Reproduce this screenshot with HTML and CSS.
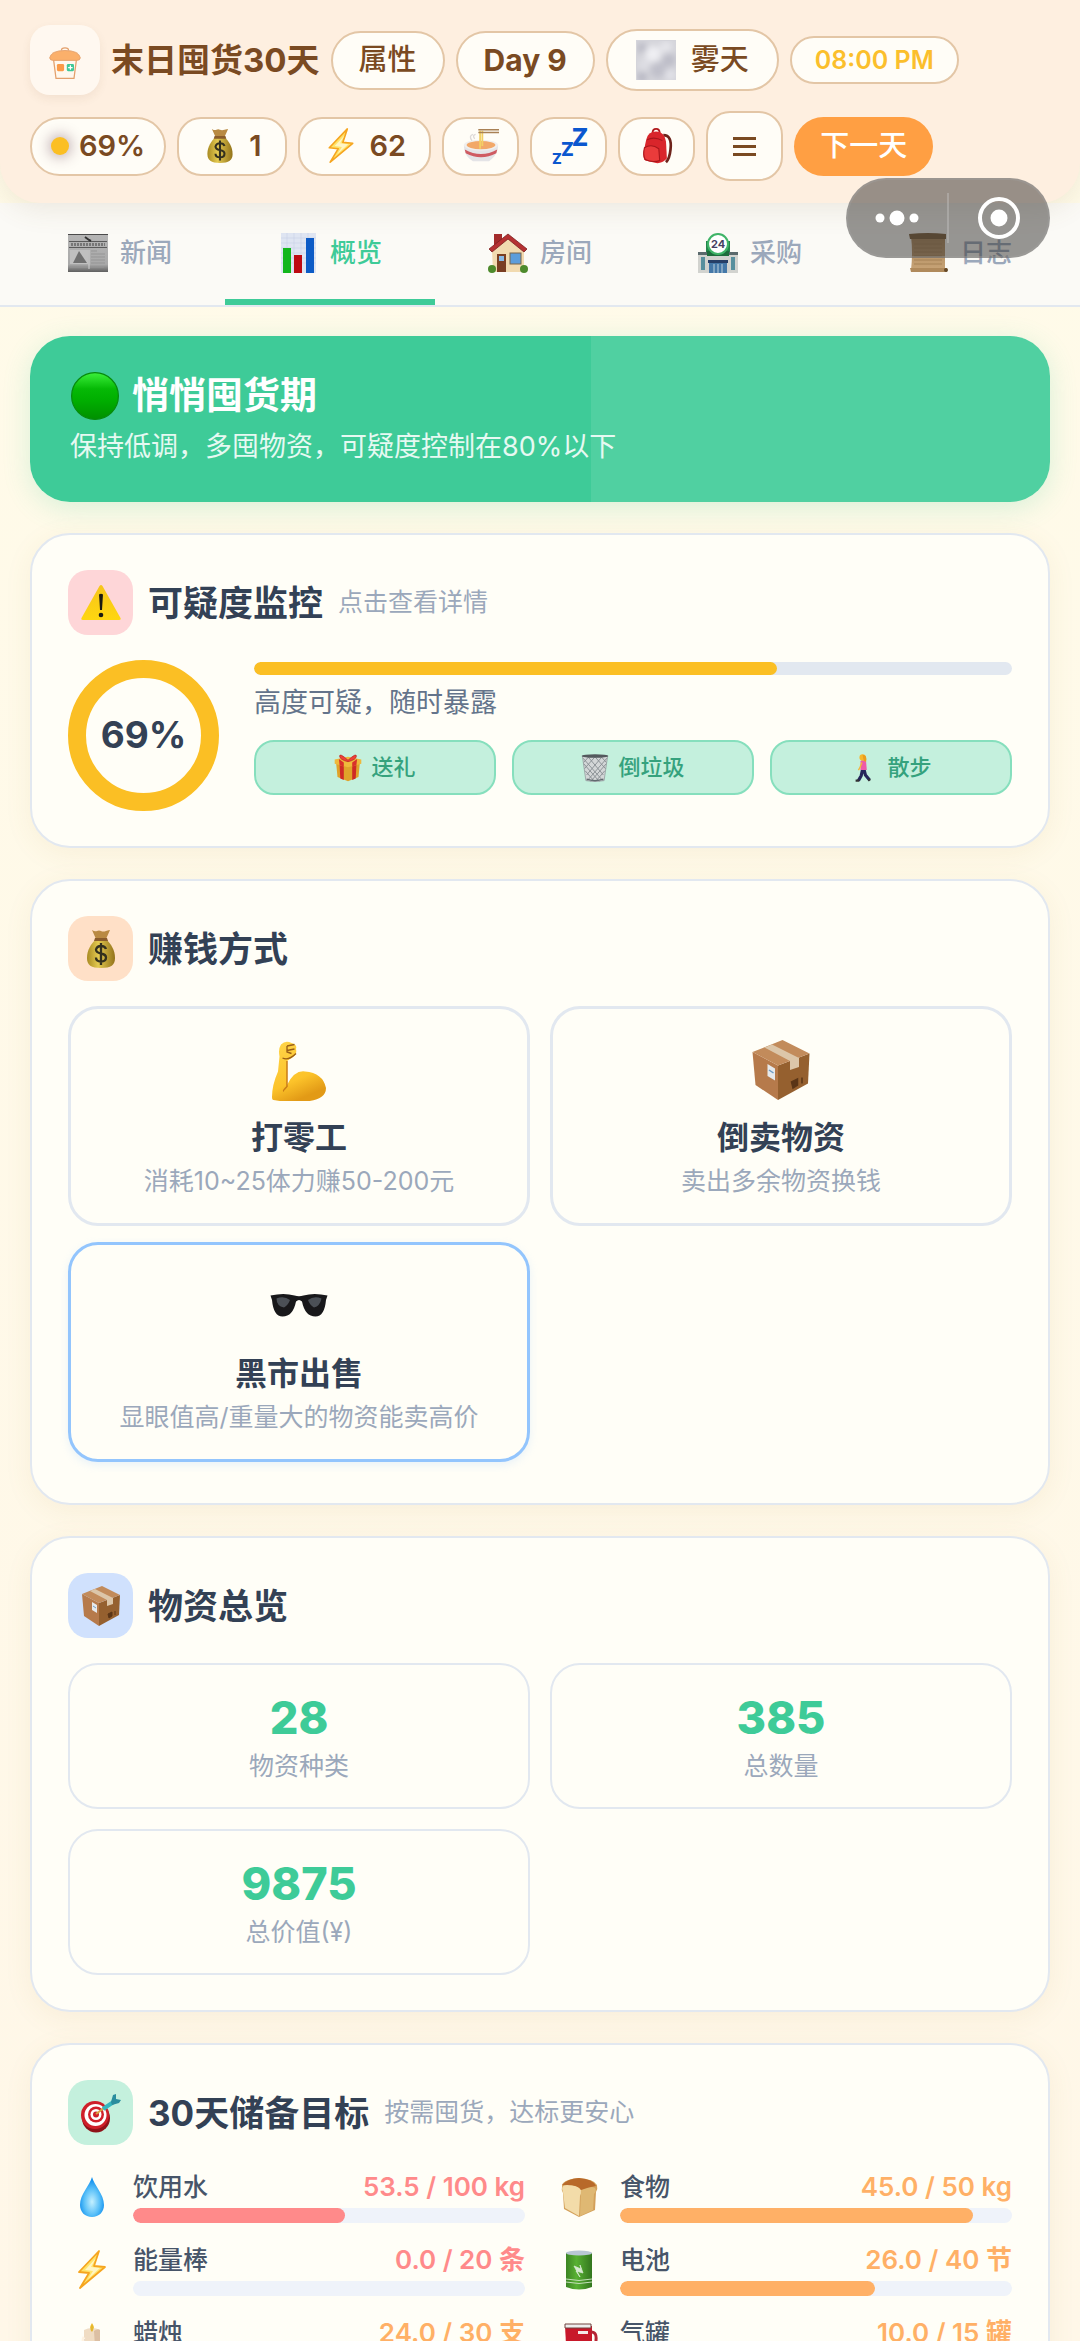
FILE: index.html
```html
<!DOCTYPE html>
<html lang="zh-CN">
<head>
    <meta charset="utf-8">
    <meta name="viewport" content="width=device-width, initial-scale=1">
    <title>末日囤货30天</title>
    <link rel="stylesheet" href="styles.css">
</head>
<body>
    <svg class="sprite" aria-hidden="true">
        <defs>
            <linearGradient id="g-gold" x1="0" x2="1" y1="0" y2="0">
                <stop offset="0" stop-color="#a98b22"/><stop offset="0.4" stop-color="#e3c950"/><stop offset="1" stop-color="#93731a"/>
            </linearGradient>
            <linearGradient id="g-arm" x1="0" x2="0.4" y1="0" y2="1">
                <stop offset="0" stop-color="#ffd54a"/><stop offset="0.7" stop-color="#fcc32a"/><stop offset="1" stop-color="#e29a16"/>
            </linearGradient>
            <linearGradient id="g-warn" x1="0" x2="0" y1="0" y2="1">
                <stop offset="0" stop-color="#f6c51c"/><stop offset="1" stop-color="#ffd60f"/>
            </linearGradient>
            <linearGradient id="g-ball" x1="0" x2="0" y1="0" y2="1">
                <stop offset="0" stop-color="#3cf03c"/><stop offset="0.35" stop-color="#05b905"/><stop offset="0.6" stop-color="#00ae00"/><stop offset="1" stop-color="#009000"/>
            </linearGradient>
            <radialGradient id="g-drop" cx="0.5" cy="0.62" r="0.55">
                <stop offset="0" stop-color="#c4f0ff"/><stop offset="0.6" stop-color="#58bff8"/><stop offset="1" stop-color="#1290ee"/>
            </radialGradient>
            <linearGradient id="g-paper" x1="0" x2="0" y1="0" y2="1">
                <stop offset="0" stop-color="#b5b5b5"/><stop offset="0.8" stop-color="#a9a9a9"/><stop offset="1" stop-color="#5f5f5f"/>
            </linearGradient>
            <linearGradient id="g-green" x1="0" x2="1" y1="0" y2="0">
                <stop offset="0" stop-color="#3c8423"/><stop offset="0.4" stop-color="#58b133"/><stop offset="1" stop-color="#33761e"/>
            </linearGradient>
            <linearGradient id="g-scroll" x1="0" x2="0" y1="0" y2="1">
                <stop offset="0" stop-color="#a98559"/><stop offset="1" stop-color="#c7a376"/>
            </linearGradient>
            <filter id="f-fog" x="0" y="0" width="1" height="1">
                <feGaussianBlur stdDeviation="3"/>
            </filter>
        </defs>

        <symbol id="i-logo" viewBox="0 0 40 40">
            <path d="M7 13 10 36h20l3-23z" fill="#fff8ee" stroke="#e3a06c" stroke-width="1.4"/>
            <path d="M16 5q0-3 4-3t4 3" fill="none" stroke="#e3a06c" stroke-width="1.4"/>
            <path d="M3 13Q5 5 20 5t17 8q0 3-4 3H7q-4 0-4-3z" fill="#fbb06b" stroke="#e3a06c"/>
            <rect x="11" y="20" width="8" height="8" rx="1.5" fill="#fb9a48"/>
            <rect x="22" y="20" width="8" height="8" rx="1.5" fill="#3fc897"/>
            <path d="M26 21.5v5M23.500 24h5" stroke="#fff" stroke-width="1.4"/>
        </symbol>
        <symbol id="i-fog" viewBox="0 0 40 40">
            <rect width="40" height="40" fill="#d4d4da"/>
            <g filter="url(#f-fog)">
                <circle cx="6" cy="8" r="5" fill="#b9b9c4"/><circle cx="17" cy="14" r="8" fill="#efeff3"/><circle cx="30" cy="7" r="6" fill="#e6e6eb"/>
                <circle cx="33" cy="20" r="7" fill="#bdbdc8"/><circle cx="8" cy="25" r="6" fill="#dedee4"/><circle cx="22" cy="30" r="8" fill="#c0c0ca"/>
                <circle cx="6" cy="37" r="5" fill="#b6b6c2"/><circle cx="34" cy="35" r="5" fill="#e4e4ea"/>
            </g>
        </symbol>
        <symbol id="i-money" viewBox="0 0 40 40">
            <path d="M11 1q3 2 5 1t4 0 5 0 4-1l-4 9H15z" fill="#b98a43"/>
            <path d="M15 10h10c5 5 9 11 9 19 0 7-4 10-14 10S6 36 6 29c0-8 4-14 9-19z" fill="url(#g-gold)"/>
            <path d="M14 9h12l1 3H13z" fill="#8a5c2c"/>
            <path d="M25 20q-1-3-5-3t-5 3.500q0 3 5 4t5 4q0 4-5 4t-5-4M20 14v22" fill="none" stroke="#33301e" stroke-width="2.300"/>
        </symbol>
        <symbol id="i-bolt" viewBox="0 0 40 40">
            <path d="M27 1 7 22l10 1L8 38l25-21-11-1z" fill="#ffe46a" stroke="#f6a51f" stroke-width="1.800" stroke-linejoin="round"/>
            <path d="M24 8 13 20l8 1-5 8 12-11-9-1z" fill="#fff5c4"/>
        </symbol>
        <symbol id="i-noodle" viewBox="0 0 40 40">
            <path d="M1 19h38c0 10-6 15-10 18H11C6 34 1 29 1 19z" fill="#e4e4e7"/>
            <path d="M2 24q18 10 36 0l-1 4q-17 9-34 0z" fill="#cf5b62"/>
            <ellipse cx="20" cy="19" rx="19" ry="6" fill="#f1efee"/>
            <ellipse cx="20" cy="19" rx="16" ry="4.500" fill="#f2a869"/>
            <path d="M19 3v20M21.500 3v17" stroke="#f3d065" stroke-width="2"/>
            <path d="M17 2h23M17 5h23" stroke="#a98155" stroke-width="1.600"/>
            <path d="M10 14q-4-5 1-7M13 12q-3-4 1-5" fill="none" stroke="#dedad8" stroke-width="1.500"/>
        </symbol>
        <symbol id="i-bag" viewBox="0 0 40 40">
            <path d="M27 8q10 0 8 16-1 10-5 14" fill="none" stroke="#6e231b" stroke-width="3"/>
            <path d="M15 6q0-5 4-5t4 5" fill="none" stroke="#b0181b" stroke-width="2"/>
            <path d="M8 13Q10 4 19 4t11 11l1 19q-6 6-12 5L7 36q-3-2-2-9z" fill="#d9252b"/>
            <path d="M6 22q8-5 16 1l1 13q-8 3-16-1-3-5-1-13z" fill="#ea3b3b" stroke="#a7161b" stroke-width="1.200"/>
            <path d="M9 13q8-4 17 1" fill="none" stroke="#a7161b" stroke-width="1.200"/>
        </symbol>
        <symbol id="i-news" viewBox="0 0 40 40">
            <rect y="1" width="40" height="38" fill="url(#g-paper)"/>
            <path d="M0 1.500h40" stroke="#4b4b4b"/>
            <path d="M1 8.500h38M1 14.500h38" stroke="#5a5a5a"/>
            <path d="M3 11.500h34" stroke="#777" stroke-width="3" stroke-dasharray="2 1"/>
            <path d="M17 4l4 3 2 1" fill="none" stroke="#333" stroke-width="2"/>
            <rect x="2" y="17" width="18" height="14" fill="#c0c0c0"/>
            <path d="M5 30l3-6 3-6 4 6 4 6z" fill="#707070"/>
            <path d="M23 18h6M23 21h14M23 24h14M23 27h14M23 30h14M2 34h34" stroke="#959595"/>
            <path d="M21 17v19" stroke="#d0d0d0"/>
        </symbol>
        <symbol id="i-chart" viewBox="0 0 40 40">
            <rect x="3" width="35" height="40" fill="#dfe5f2"/>
            <path d="M3 5h35M3 10h35M3 15h35M3 20h35M3 25h35M3 30h35M9 0v40M16 0v40M23 0v40M30 0v40" stroke="#c9d2e6" stroke-width="0.600"/>
            <rect x="5" y="15" width="8" height="25" fill="#12b61c"/>
            <rect x="16" y="22" width="8" height="18" fill="#bd0a12"/>
            <rect x="28" y="5" width="8" height="35" fill="#0c5bc6"/>
        </symbol>
        <symbol id="i-house" viewBox="0 0 40 40">
            <rect x="6" y="1" width="8" height="13" fill="#a32c2b"/>
            <path d="M4 17 20 4l16 13v22H5z" fill="#f1dab0"/>
            <path d="M1 16 20 1l19 15-3 3L20 6 4 19z" fill="#b53132" stroke="#7c1f20" stroke-width="0.800"/>
            <rect x="9" y="21" width="9" height="18" fill="#7a3e22"/><rect x="11" y="23" width="5" height="5" fill="#88b9e5"/>
            <rect x="22" y="20" width="11" height="11" fill="#5c9ddb" stroke="#7b6548"/>
            <circle cx="4" cy="36" r="4" fill="#4d8a2c"/><circle cx="36" cy="36" r="4" fill="#4d8a2c"/>
        </symbol>
        <symbol id="i-store" viewBox="0 0 40 40">
            <path d="M8 8h24v13H8z" fill="#24854b"/>
            <path d="M0 19h40v21H0z" fill="#d2d3cf"/>
            <path d="M0 19h40v3H0z" fill="#5b6a6d"/>
            <path d="M9 18h22v5H9z" fill="#1d6c3c"/>
            <path d="M3 24h4v13H3zM33 24h4v13h-4z" fill="#578f9d"/>
            <path d="M11 29h18v11H11z" fill="#4478a8"/><path d="M10 27h20v3H10z" fill="#263f67"/>
            <path d="M16 31v9M20 31v9M24 31v9" stroke="#bdd0dc"/>
            <circle cx="20" cy="11" r="10" fill="#fff" stroke="#3fb468" stroke-width="2"/>
        </symbol>
        <symbol id="i-scroll" viewBox="0 0 40 40">
            <path d="M3 3h34v34H3q2-17 0-34z" fill="url(#g-scroll)"/>
            <path d="M1 1q19-2 37 0v5H2z" fill="#7c5e3b"/><path d="M2 35h37v4H3z" fill="#b08a5c"/>
            <path d="M6 11h28M6 15h28M6 19h28M6 23h28M6 27h28M6 31h28" stroke="#a58256"/>
            <circle cx="38" cy="37" r="2" fill="#654827"/>
        </symbol>
        <symbol id="i-ball" viewBox="0 0 40 40">
            <circle cx="20" cy="20" r="19.500" fill="url(#g-ball)" stroke="#078b0d"/>
        </symbol>
        <symbol id="i-warn" viewBox="0 0 40 40">
            <path d="M18.500 3q1.500-2 3 0L39.500 35q.8 2-1.500 2H2q-2.300 0-1.500-2z" fill="url(#g-warn)"/>
            <path d="M18 11.500q2-1.500 4 0L21 27h-2z" fill="#1b1a12"/><circle cx="20" cy="32" r="2.300" fill="#1b1a12"/>
        </symbol>
        <symbol id="i-gift" viewBox="0 0 40 40">
            <path d="M3 12 20 17l17-5-2 21-15 6-15-6z" fill="#e0a32a"/>
            <path d="M1 8 20 4l19 4v6l-19 5L1 14z" fill="#efb93b"/>
            <path d="M8 16l6 2v19l-5-2zM26 18l6-2-1 19-5 2z" fill="#cf2a26"/>
            <path d="M7 7l7 5v6l-6-2zM33 7l-7 5v6l6-2z" fill="#d9302b"/>
            <path d="M20 9Q8-2 8 3t12 8q12-3 12-8t-12 6z" fill="#ee4038" stroke="#b81f20"/>
        </symbol>
        <symbol id="i-bin" viewBox="0 0 40 40">
            <path d="M2 3h36l-5 35q-13 3-26 0z" fill="#d3d6d7" stroke="#8d9296"/>
            <path d="M3 6 31 38M10 4l22 26M20 4l15 17M29 4l7 8M4 14l22 25M6 24l13 15M37 6 9 38M30 4 8 30M20 4 5 21M11 4 4 12M36 14 14 39M34 24 21 39" stroke="#878d92" stroke-width="1.300"/>
            <ellipse cx="20" cy="3" rx="19" ry="2.500" fill="#53595d"/><path d="M8 36q12 4 24 0" stroke="#626a6f" stroke-width="2" fill="none"/>
        </symbol>
        <symbol id="i-walk" viewBox="0 0 40 40">
            <path d="M18 22 16 31 12 38M20 22l2 8 6 7" fill="none" stroke="#26265a" stroke-width="4.500"/>
            <path d="M8 38h5M26 38l3-2" stroke="#333" stroke-width="3"/>
            <path d="M15 10q5-3 8 1l1 12h-9z" fill="#ee5ba8"/>
            <path d="M17 12l-3 8-2 3" fill="none" stroke="#f3b53b" stroke-width="2"/>
            <circle cx="18" cy="5" r="4.500" fill="#f6b72c"/><path d="M18 1q7 0 5 10-3 1-4-4z" fill="#ea9c1e"/>
        </symbol>
        <symbol id="i-arm" viewBox="0 0 40 40">
            <path d="M8 3q3-3 7-1 4 1 3 4 1 4-3 6l-3 2v16q5-10 12-9 12 1 14 11 0 8-14 9-10 1-21-1-1 0-1-2 0-8 4-17L7 11q-1-5 1-8z" fill="url(#g-arm)"/>
            <path d="M12 14v17q-3 3-2 3" fill="none" stroke="#c97c16"/>
            <path d="M12 4l5-1M12 7l5-1M12 4v4l3 1M9 12q4 2 9-3" fill="none" stroke="#9a5f16" stroke-width="0.900"/>
        </symbol>
        <symbol id="i-box" viewBox="0 0 40 40">
            <path d="M1 8 18 17v23L3 30z" fill="#b67a4b"/><path d="M18 17 39 9l-1 20-20 11z" fill="#95602f"/>
            <path d="M1 8 21 0l18 9-21 8z" fill="#c28b5b"/>
            <path d="M9 5l5-2 18 9v6l-6 2v-6z" fill="#dcc6a9"/>
            <path d="M11 16l5 3v8l-5-3z" fill="#e6e9ec"/><path d="M12 20l3 2" stroke="#6c9bc4"/>
            <path d="M27 28l4-2v4l-3 2zM34 25v4" fill="#5a3517" stroke="#5a3517"/>
        </symbol>
        <symbol id="i-shades" viewBox="0 0 40 40">
            <path d="M1 13q9-2 16 0 3 1 6 0 7-2 16 0l-1 3q-1 11-7 11-7 0-9-10-2-2-4 0-2 10-9 10-6 0-7-11z" fill="#18181a"/>
            <path d="M5 15q5-2 9 1-1 3-4 5-5-1-5-6zM26 16q4-3 9-1-1 5-5 6-3-2-4-5z" fill="#4b5056"/>
        </symbol>
        <symbol id="i-target" viewBox="0 0 40 40">
            <ellipse cx="15" cy="25" rx="14" ry="14.500" fill="#8f1219"/>
            <ellipse cx="14" cy="22" rx="14" ry="14" fill="#cf1f29"/><ellipse cx="14.500" cy="22" rx="11" ry="11" fill="#fff"/>
            <ellipse cx="15" cy="21.500" rx="8" ry="8" fill="#cf1f29"/><ellipse cx="15" cy="21.500" rx="5.500" ry="5.500" fill="#fff"/><circle cx="15" cy="21.500" r="3" fill="#cf1f29"/>
            <path d="M15 21 23 15" stroke="#d9a441" stroke-width="2"/>
            <path d="M22 16 34 8" stroke="#35b5bf" stroke-width="4"/>
            <path d="M30 9l2-7 3-1v5l5 1-2 3-7 2z" fill="#2a8d9e"/>
        </symbol>
        <symbol id="i-drop" viewBox="0 0 40 40">
            <path d="M20 0c2 8 12 17 12 28 0 7-5 12-12 12S8 35 8 28C8 17 18 8 20 0z" fill="url(#g-drop)"/>
        </symbol>
        <symbol id="i-bread" viewBox="0 0 40 40">
            <path d="M3 10Q2 3 19 1q16 1 19 7 1 4-1 7l-1 18-16 7L5 32 4 16q-2-3-1-6z" fill="#d3a05a"/>
            <path d="M4 15Q1 8 8 8q12 0 14 5 1 3-1 6l-1 20L6 31z" fill="#f3dca9"/>
            <path d="M22 13q9-5 14-2 2 3-1 6l-1 16-13 6z" fill="#dfb873"/>
            <path d="M3 8q5-6 17-7 14 1 17 8-7 1-15 4-3-5-14-5z" fill="#b8692a"/>
        </symbol>
        <symbol id="i-battery" viewBox="0 0 40 40">
            <path d="M7 3v34q13 5 26 0V3z" fill="url(#g-green)"/><ellipse cx="20" cy="3" rx="13" ry="2.500" fill="#b9c7d4"/>
            <path d="M15 16l7 3-1-4 3 8-7-2 4 6z" fill="#d6e9d0" stroke="#d6e9d0" stroke-width="0.800"/>
            <path d="M7 29q13 3 26 0M7 32q13 3 26 0" fill="none" stroke="#c4dfb9"/>
        </symbol>
        <symbol id="i-candle" viewBox="0 0 40 40">
            <path d="M20 0q4 6 0 9-4-3 0-9z" fill="#f2c43c"/>
            <path d="M12 7q8-4 16 0v31H12z" fill="#f0dcc3"/><path d="M22 8q4-3 6-1v31h-4z" fill="#dcbfa3"/><path d="M20 1q3 4 0 8-3-3 0-8z" fill="#e5b82f"/><path d="M12 14q-2 4 1 6" stroke="#fff3e2" stroke-width="3"/>
        </symbol>
        <symbol id="i-can" viewBox="0 0 40 40">
            <path d="M6 3h27v36H8z" fill="#c8182a"/><path d="M6 1h26v4H6z" fill="#eee" stroke="#71443f"/>
            <path d="M32 9q6 0 5 8v14" fill="none" stroke="#b52535" stroke-width="3"/><rect x="19" y="8" width="10" height="3" fill="#f3e8e8"/>
        </symbol>
    </svg>

    <header class="top-bar">
        <div class="top-row">
            <div class="logo"><svg class="icon"><use href="#i-logo"/></svg></div>
            <h1 class="app-title">末日囤货30天</h1>
            <button class="pill pill-attr">属性</button>
            <span class="pill pill-day">Day 9</span>
            <span class="pill pill-weather"><svg class="icon icon-m"><use href="#i-fog"/></svg>雾天</span>
            <span class="pill pill-time">08:00 PM</span>
        </div>
        <div class="top-row">
            <button class="pill stat-pill round"><span class="dot"></span>69%</button>
            <span class="pill stat-pill"><svg class="icon icon-s"><use href="#i-money"/></svg>1</span>
            <span class="pill stat-pill"><svg class="icon icon-s"><use href="#i-bolt"/></svg>62</span>
            <button class="pill icon-pill" aria-label="吃饭"><svg class="icon icon-s"><use href="#i-noodle"/></svg></button>
            <button class="pill icon-pill" aria-label="睡觉">
                <svg class="icon icon-s zzz" viewBox="0 0 40 40"><text x="23" y="20" font-size="27">Z</text><text x="11" y="31" font-size="21">Z</text><text x="1" y="40" font-size="16">Z</text></svg>
            </button>
            <button class="pill icon-pill" aria-label="背包"><svg class="icon icon-s"><use href="#i-bag"/></svg></button>
            <button class="pill icon-pill menu" aria-label="菜单"><span class="menu-lines"></span></button>
            <button class="pill next-day">下一天</button>
        </div>
    </header>

    <nav class="tabs">
        <a class="tab" href="#news"><svg class="icon icon-m"><use href="#i-news"/></svg>新闻</a>
        <a class="tab active" href="#overview"><svg class="icon icon-m"><use href="#i-chart"/></svg>概览</a>
        <a class="tab" href="#room"><svg class="icon icon-m"><use href="#i-house"/></svg>房间</a>
        <a class="tab" href="#shop"><svg class="icon icon-m" viewBox="0 0 40 40"><use href="#i-store"/><text class="store-sign" x="20" y="15">24</text></svg>采购</a>
        <a class="tab" href="#log"><svg class="icon icon-m"><use href="#i-scroll"/></svg>日志</a>
    </nav>

    <!-- mini program capsule -->
    <div class="capsule">
        <button class="capsule-btn" aria-label="更多"><svg width="50" height="44" viewBox="0 0 50 44"><g fill="#fff"><circle cx="7" cy="22" r="4.500"/><circle cx="24" cy="22" r="7.500"/><circle cx="41" cy="22" r="4.500"/></g></svg></button>
        <button class="capsule-btn" aria-label="关闭"><svg width="44" height="44" viewBox="0 0 44 44"><circle cx="22" cy="22" r="19" fill="none" stroke="#fff" stroke-width="4"/><circle cx="22" cy="22" r="8.500" fill="#fff"/></svg></button>
    </div>

    <main class="content">
        <section class="phase">
            <h2 class="phase-title"><svg class="icon"><use href="#i-ball"/></svg>悄悄囤货期</h2>
            <p class="phase-desc">保持低调，多囤物资，可疑度控制在80%以下</p>
        </section>

        <section class="card">
            <div class="card-head">
                <span class="badge badge-red"><svg class="icon icon-m"><use href="#i-warn"/></svg></span>
                <h2>可疑度监控</h2>
                <span class="hint">点击查看详情</span>
            </div>
            <div class="suspicion">
                <div class="ring">69%</div>
                <div class="suspicion-body">
                    <div class="meter"><div class="meter-fill" style="width: 69%"></div></div>
                    <p class="suspicion-text">高度可疑，随时暴露</p>
                    <div class="actions">
                        <button class="action"><svg class="icon"><use href="#i-gift"/></svg>送礼</button>
                        <button class="action"><svg class="icon"><use href="#i-bin"/></svg>倒垃圾</button>
                        <button class="action"><svg class="icon"><use href="#i-walk"/></svg>散步</button>
                    </div>
                </div>
            </div>
        </section>

        <section class="card">
            <div class="card-head">
                <span class="badge badge-orange"><svg class="icon icon-m"><use href="#i-money"/></svg></span>
                <h2>赚钱方式</h2>
            </div>
            <div class="earn-grid">
                <button class="earn">
                    <svg class="icon"><use href="#i-arm"/></svg>
                    <span class="earn-name">打零工</span>
                    <span class="earn-desc">消耗10~25体力赚50-200元</span>
                </button>
                <button class="earn">
                    <svg class="icon"><use href="#i-box"/></svg>
                    <span class="earn-name">倒卖物资</span>
                    <span class="earn-desc">卖出多余物资换钱</span>
                </button>
                <button class="earn black-market">
                    <svg class="icon"><use href="#i-shades"/></svg>
                    <span class="earn-name">黑市出售</span>
                    <span class="earn-desc">显眼值高/重量大的物资能卖高价</span>
                </button>
            </div>
        </section>

        <section class="card">
            <div class="card-head">
                <span class="badge badge-blue"><svg class="icon icon-m"><use href="#i-box"/></svg></span>
                <h2>物资总览</h2>
            </div>
            <div class="stat-grid">
                <div class="stat"><b>28</b><span>物资种类</span></div>
                <div class="stat"><b>385</b><span>总数量</span></div>
                <div class="stat"><b>9875</b><span>总价值(¥)</span></div>
            </div>
        </section>

        <section class="card">
            <div class="card-head">
                <span class="badge badge-green"><svg class="icon icon-m"><use href="#i-target"/></svg></span>
                <h2>30天储备目标</h2>
                <span class="hint">按需囤货，达标更安心</span>
            </div>
            <div class="goals">
                <div class="goal low">
                    <svg class="icon"><use href="#i-drop"/></svg>
                    <div class="goal-body">
                        <div class="goal-text"><span>饮用水</span><b>53.5 / 100 kg</b></div>
                        <div class="goal-bar"><div class="goal-fill" style="width: 54%"></div></div>
                    </div>
                </div>
                <div class="goal">
                    <svg class="icon"><use href="#i-bread"/></svg>
                    <div class="goal-body">
                        <div class="goal-text"><span>食物</span><b>45.0 / 50 kg</b></div>
                        <div class="goal-bar"><div class="goal-fill" style="width: 90%"></div></div>
                    </div>
                </div>
                <div class="goal low">
                    <svg class="icon"><use href="#i-bolt"/></svg>
                    <div class="goal-body">
                        <div class="goal-text"><span>能量棒</span><b>0.0 / 20 条</b></div>
                        <div class="goal-bar"><div class="goal-fill" style="width: 0%"></div></div>
                    </div>
                </div>
                <div class="goal">
                    <svg class="icon"><use href="#i-battery"/></svg>
                    <div class="goal-body">
                        <div class="goal-text"><span>电池</span><b>26.0 / 40 节</b></div>
                        <div class="goal-bar"><div class="goal-fill" style="width: 65%"></div></div>
                    </div>
                </div>
                <div class="goal">
                    <svg class="icon"><use href="#i-candle"/></svg>
                    <div class="goal-body">
                        <div class="goal-text"><span>蜡烛</span><b>24.0 / 30 支</b></div>
                        <div class="goal-bar"><div class="goal-fill" style="width: 80%"></div></div>
                    </div>
                </div>
                <div class="goal">
                    <svg class="icon"><use href="#i-can"/></svg>
                    <div class="goal-body">
                        <div class="goal-text"><span>气罐</span><b>10.0 / 15 罐</b></div>
                        <div class="goal-bar"><div class="goal-fill" style="width: 67%"></div></div>
                    </div>
                </div>
            </div>
        </section>
    </main>
</body>
</html>
```
FILE: styles.css
```css
:root {
    font-family: Inter, "Noto Sans CJK SC", sans-serif;
    --brown: #7a4a22;
    --tan: #e3c6a6;
    --line: #e2e8f0;
    --paper: #fffdf7;
    --ink: #334155;
    --muted: #9ba8bb;
    --green: #3ecb98;
}

* {
    box-sizing: border-box;
}

html, body {
    height: 100%;
    margin: 0;
}

body {
    display: flex;
    flex-direction: column;
    overflow: hidden;
    background: linear-gradient(#fffbe9, #fff7e8);
    line-height: 1.3;
}

h1, h2, p {
    margin: 0;
}

button {
    font: inherit;
    cursor: pointer;
}

.sprite {
    position: absolute;
    width: 0;
    height: 0;
}

.icon {
    flex: none;
    display: block;
}

.icon-s {
    width: 36px;
    height: 36px;
}

.icon-m {
    width: 40px;
    height: 40px;
}

/* header */
.top-bar {
    position: relative;
    z-index: 1;
    flex: none;
    display: flex;
    flex-direction: column;
    gap: 16px;
    padding: 25px 30px 22px;
    background: #feefe0;
    border-radius: 0 0 40px 40px;
    box-shadow: 0 6px 28px rgba(120, 100, 60, 0.12);
}

.top-row {
    display: flex;
    align-items: center;
    gap: 11px;
    color: var(--brown);
}

.logo {
    display: flex;
    align-items: center;
    justify-content: center;
    width: 70px;
    height: 70px;
    padding-top: 8px;
    border-radius: 20px;
    background: #fff8f0;
    box-shadow: 0 4px 10px rgba(120, 80, 40, 0.08);
}

.logo .icon {
    width: 36px;
    height: 38px;
}

.app-title {
    font-size: 33px;
    font-weight: 700;
    white-space: nowrap;
}

.pill {
    display: flex;
    align-items: center;
    justify-content: center;
    gap: 11px;
    height: 59px;
    padding: 0 23px;
    border: 2px solid var(--tan);
    border-radius: 32px;
    background: var(--paper);
    color: var(--brown);
    font-size: 29px;
    font-weight: 600;
    white-space: nowrap;
}

.pill-attr,
.pill-day {
    padding: 0 26px;
    font-weight: 500;
}

.pill-day {
    font-size: 30px;
    font-weight: 700;
}

.pill-weather {
    height: 62px;
    padding: 0 28px;
    gap: 15px;
    font-weight: 500;
}

.pill-time {
    height: 48px;
    color: #fbbf2c;
    font-size: 25px;
}

.stat-pill {
    border-radius: 24px;
}

.round {
    padding: 0 19px;
    border-radius: 30px;
    gap: 10px;
}

.dot {
    width: 18px;
    height: 18px;
    border-radius: 50%;
    background: #fbbf24;
    box-shadow: 0 0 14px 2px rgba(90, 50, 70, 0.4);
}

.icon-pill {
    width: 77px;
    padding: 0;
    border-radius: 24px;
}

.zzz {
    overflow: visible;
    fill: #0b57cf;
    font-weight: 800;
}

.menu {
    height: 70px;
}

.menu-lines {
    width: 23px;
    height: 19px;
    border-top: 3px solid var(--brown);
    border-bottom: 3px solid var(--brown);
    background: linear-gradient(var(--brown), var(--brown)) center / 100% 3px no-repeat;
}

.next-day {
    padding: 0 26px;
    border: none;
    background: #ff9f43;
    color: #fff;
    font-weight: 500;
}

/* tabs */
.tabs {
    flex: none;
    display: flex;
    padding: 0 15px;
    background: #fbfaf6;
    border-bottom: 2px solid var(--line);
}

.tab {
    flex: 1;
    display: flex;
    align-items: center;
    justify-content: center;
    gap: 12px;
    height: 102px;
    padding-top: 4px;
    border-bottom: 6px solid transparent;
    color: var(--muted);
    font-size: 26px;
    font-weight: 500;
    text-decoration: none;
}

.tab.active {
    color: var(--green);
    border-bottom-color: var(--green);
}

.store-sign {
    fill: #463f63;
    font-size: 11px;
    font-weight: 700;
    text-anchor: middle;
}

/* floats over header and tabs */
.capsule {
    position: fixed;
    z-index: 2;
    top: 178px;
    right: 30px;
    display: flex;
    width: 204px;
    height: 80px;
    border: 2px solid rgba(160, 160, 160, 0.4);
    border-radius: 40px;
    background: rgba(50, 48, 46, 0.5);
}

.capsule-btn {
    flex: 1;
    display: flex;
    align-items: center;
    justify-content: center;
    margin: 13px 0;
    padding: 0;
    border: none;
    background: none;
}

.capsule-btn + .capsule-btn {
    border-left: 2px solid rgba(200, 200, 200, 0.4);
}

/* content */
.content {
    flex: 1;
    min-height: 0;
    display: flex;
    flex-direction: column;
    gap: 31px;
    padding: 29px 30px 30px;
    overflow-y: auto;
    scrollbar-width: none;
}

.phase {
    flex: none;
    padding: 33px 40px 31px;
    border-radius: 40px;
    background: linear-gradient(90deg, #3ecb98 55%, #50d0a1 55%);
    box-shadow: 0 6px 28px rgba(62, 203, 152, 0.2);
    color: #fff;
}

.phase-title {
    display: flex;
    align-items: center;
    gap: 12px;
    font-size: 37px;
    line-height: 54px;
}

.phase-title .icon {
    width: 50px;
    height: 48px;
}

.phase-desc {
    font-size: 27px;
    line-height: 48px;
    color: #e6f9f2;
}

.card {
    flex: none;
    padding: 35px 36px;
    border: 2px solid var(--line);
    border-radius: 40px;
    background: #fffef7;
    box-shadow: 0 6px 28px rgba(160, 130, 50, 0.08);
}

.card-head {
    display: flex;
    align-items: center;
    gap: 15px;
    margin-bottom: 25px;
}

.card-head h2 {
    color: var(--ink);
    font-size: 35px;
    line-height: 48px;
}

.badge {
    display: flex;
    align-items: center;
    justify-content: center;
    width: 65px;
    height: 65px;
    border-radius: 20px;
}

.badge-red {
    background: #fed6d8;
}

.badge-orange {
    background: #ffe0c7;
}

.badge-blue {
    background: #d0e1fd;
}

.badge-green {
    background: #c4f0dd;
}

.hint {
    color: var(--muted);
    font-size: 25px;
}

/* suspicion */
.suspicion {
    display: flex;
    align-items: center;
    gap: 35px;
}

.ring {
    flex: none;
    display: flex;
    align-items: center;
    justify-content: center;
    width: 151px;
    height: 151px;
    border: 18px solid #fbbf24;
    border-radius: 50%;
    color: var(--ink);
    font-size: 37px;
    font-weight: 700;
}

.suspicion-body {
    flex: 1;
    padding-bottom: 14px;
}

.meter {
    height: 13px;
    border-radius: 7px;
    background: var(--line);
    overflow: hidden;
}

.meter-fill {
    height: 100%;
    border-radius: 7px;
    background: #fbbf24;
}

.suspicion-text {
    margin: 8px 0 17px;
    color: #64748b;
    font-size: 27px;
    line-height: 40px;
}

.actions {
    display: grid;
    grid-template-columns: repeat(3, 1fr);
    gap: 16px;
}

.action {
    display: flex;
    align-items: center;
    justify-content: center;
    gap: 9px;
    height: 55px;
    border: 2px solid #86dfbd;
    border-radius: 20px;
    background: #c4f0dd;
    color: #35a27d;
    font-size: 22px;
    font-weight: 500;
}

.action .icon {
    width: 28px;
    height: 28px;
}

/* earning */
.earn-grid {
    display: grid;
    grid-template-columns: 1fr 1fr;
    gap: 16px 20px;
    padding-bottom: 6px;
}

.earn {
    display: flex;
    flex-direction: column;
    align-items: center;
    padding: 30px 20px 24px;
    border: 3px solid var(--line);
    border-radius: 30px;
    background: none;
}

.earn .icon {
    width: 60px;
    height: 62px;
    margin-bottom: 16px;
}

.earn-name {
    color: var(--ink);
    font-size: 32px;
    font-weight: 700;
    line-height: 42px;
}

.earn-desc {
    margin-top: 4px;
    color: var(--muted);
    font-size: 25px;
    line-height: 36px;
}

.black-market {
    border-color: #93c5fd;
    box-shadow: 0 3px 8px rgba(147, 197, 253, 0.2);
}

/* supplies */
.stat-grid {
    display: grid;
    grid-template-columns: 1fr 1fr;
    gap: 20px;
}

.stat {
    display: flex;
    flex-direction: column;
    align-items: center;
    gap: 3px;
    padding: 26px 20px 23px;
    border: 2px solid var(--line);
    border-radius: 30px;
}

.stat b {
    color: var(--green);
    font-size: 45px;
    font-weight: 800;
    line-height: 54px;
}

.stat span {
    color: var(--muted);
    font-size: 25px;
    line-height: 36px;
}

/* goals */
.goals {
    display: grid;
    grid-template-columns: 1fr 1fr;
    gap: 20px 30px;
}

.goal {
    display: flex;
    align-items: center;
    gap: 17px;
    color: #ffb066;
}

.goal.low {
    color: #ff8a8a;
}

.goal > .icon {
    width: 48px;
    height: 40px;
}

.goal-body {
    flex: 1;
}

.goal-text {
    display: flex;
    justify-content: space-between;
    margin-bottom: 4px;
    font-size: 25px;
    line-height: 34px;
}

.goal-text span {
    color: #475569;
    font-weight: 500;
}

.goal-text b {
    font-size: 26px;
    font-weight: 600;
}

.goal-bar {
    height: 15px;
    border-radius: 8px;
    background: #eff3fa;
    overflow: hidden;
}

.goal-fill {
    height: 100%;
    border-radius: 8px;
    background: currentColor;
}
```
